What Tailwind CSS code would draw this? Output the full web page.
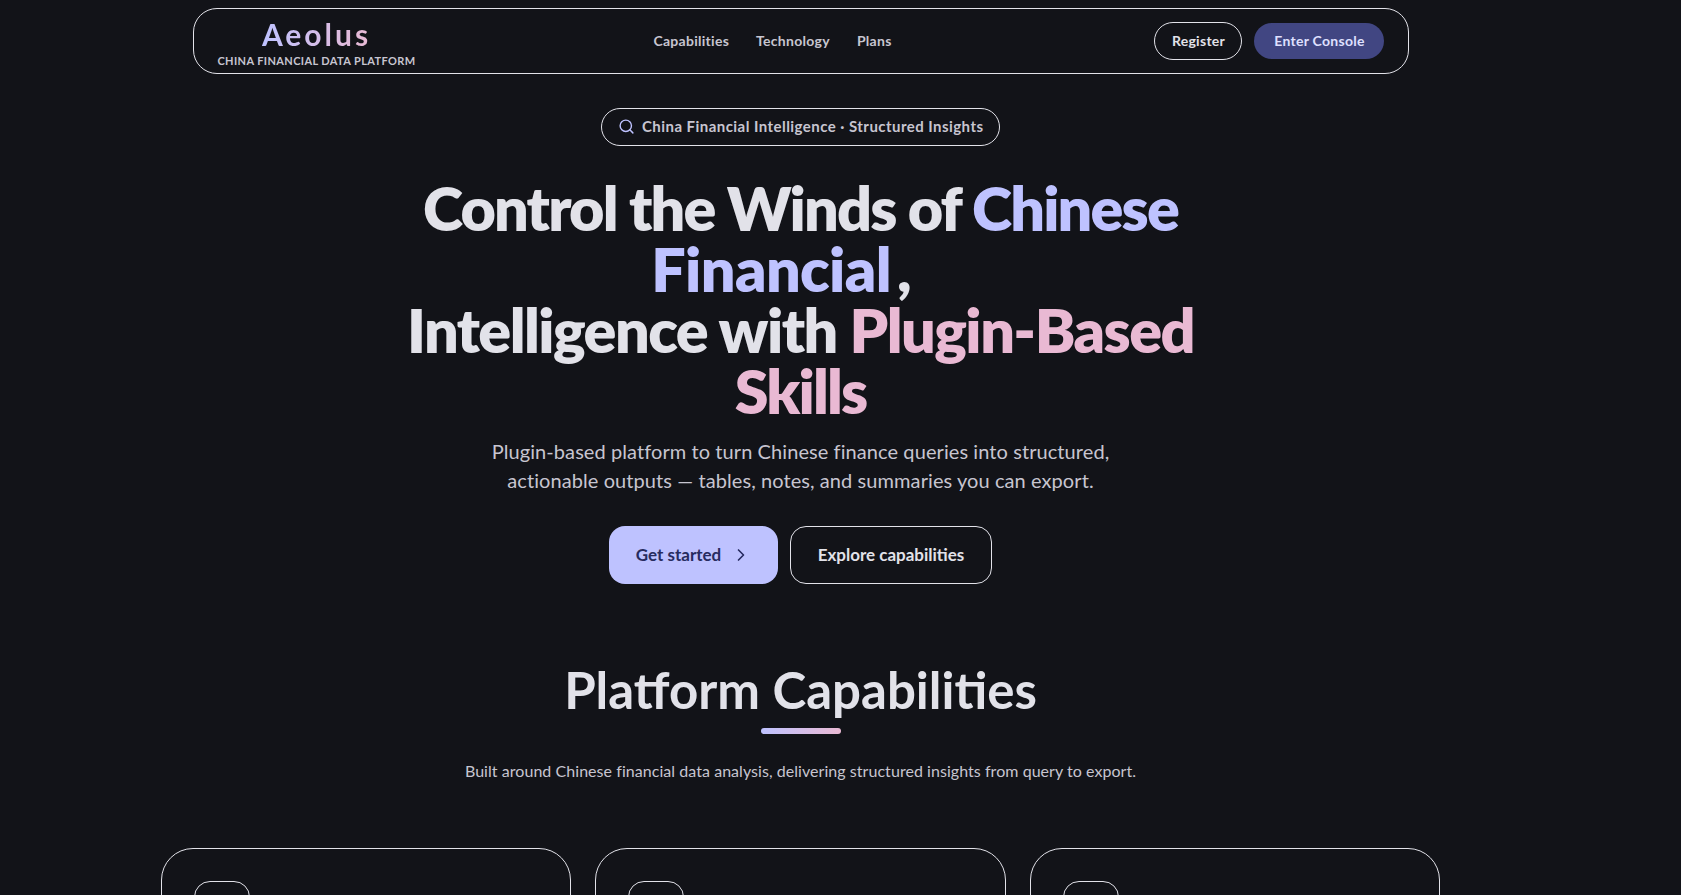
<!DOCTYPE html>
<html lang="en">
<head>
<meta charset="utf-8">
<title>Aeolus</title>
<script src="https://cdn.jsdelivr.net/npm/@tailwindcss/browser@4"></script>
</head>
<body class="bg-[#121318] h-[895px] overflow-hidden font-['Lato','Liberation_Sans',sans-serif] text-[#e2e2e9]">
<main class="w-[1601px] flex flex-col items-center pt-2">
  <nav class="w-[1216px] h-[66px] shrink-0 border border-[#e2e2e9] rounded-[24px] flex justify-between items-center pl-6 pr-[23px]">
    <div class="flex flex-col items-center w-[222px] pr-6 pt-[4px]">
      <span class="text-[30px] leading-[32px] font-bold tracking-[0.1em] bg-gradient-to-r from-[#bec2ff] to-[#e9b9d3] bg-clip-text text-transparent">Aeolus</span>
      <span class="text-[11px] leading-[14px] font-bold text-[#c7c5d0] tracking-[0.035em] mt-[4px] whitespace-nowrap">CHINA FINANCIAL DATA PLATFORM</span>
    </div>
    <div class="flex items-center gap-[27px] mr-[49px] text-[14px] font-bold text-[#c7c5d0] tracking-[0.02em] pb-[2px]">
      <a>Capabilities</a><a>Technology</a><a>Plans</a>
    </div>
    <div class="flex items-center gap-3 text-[14px] font-bold tracking-[0.02em]">
      <button class="h-[38px] w-[88px] pb-[2px] rounded-full border border-[#e2e2e9] text-[#e2e2e9]">Register</button>
      <button class="h-[36px] w-[130px] pb-[2px] rounded-full bg-[#414682] text-[#dfe0ff]">Enter Console</button>
    </div>
  </nav>
  <div class="mt-[34px] h-[38px] w-[399px] pb-[1px] rounded-full border border-[#e2e2e9] flex items-center pl-4 gap-[7px] text-[15px] font-bold text-[#c7c5d0] tracking-[0.03em] whitespace-nowrap">
    <svg class="w-[17px] h-[17px] text-[#bec2ff]" viewBox="0 0 24 24" fill="none" stroke="currentColor" stroke-width="2" stroke-linecap="round" stroke-linejoin="round"><circle cx="11" cy="11" r="8"/><path d="m21 21-4.3-4.3"/></svg>
    <span>China Financial Intelligence · Structured Insights</span>
  </div>
  <h1 class="mt-[31px] text-center text-[61px] leading-[61px] font-extrabold tracking-[-0.03em] whitespace-nowrap">
    Control the Winds of <span class="text-[#bec2ff]">Chinese</span><br>
    <span class="text-[#bec2ff] tracking-[-0.01em]">Financial</span><span class="ml-[6px] mr-[40px]">,</span><br>
    <span class="tracking-[-0.025em]">Intelligence with <span class="text-[#e9b9d3]">Plugin-Based</span></span><br>
    <span class="text-[#e9b9d3]">Skills</span>
  </h1>
  <p class="mt-[16px] text-center text-[20px] leading-[29px] tracking-[0.08px] text-[#c7c5d0] whitespace-nowrap">
    Plugin-based platform to turn Chinese finance queries into structured,<br>
    actionable outputs — tables, notes, and summaries you can export.
  </p>
  <div class="mt-[31px] flex gap-3 text-[17px] font-bold">
    <button class="w-[169px] h-[58px] pb-[1px] rounded-2xl bg-[#bec2ff] text-[#272b60] flex items-center justify-center gap-[10px]">Get started
      <svg class="w-[20px] h-[20px]" viewBox="0 0 24 24" fill="none" stroke="currentColor" stroke-width="2" stroke-linecap="round" stroke-linejoin="round"><path d="m9 18 6-6-6-6"/></svg>
    </button>
    <button class="w-[202px] h-[58px] pb-[1px] rounded-2xl border border-[#e2e2e9] text-[#e2e2e9]">Explore capabilities</button>
  </div>
  <h2 class="mt-[78px] text-[51px] leading-[56px] font-bold text-center">Platform Capabilities</h2>
  <div class="mt-[10px] w-[80px] h-[6px] rounded-full bg-gradient-to-r from-[#bec2ff] to-[#e9b9d3]"></div>
  <p class="mt-[25px] text-[16px] leading-[24px] tracking-[0.05px] text-[#c7c5d0] text-center">Built around Chinese financial data analysis, delivering structured insights from query to export.</p>
  <div class="mt-[65px] w-[1280px] grid grid-cols-3 gap-6">
    <div class="h-[300px] rounded-[32px] border border-[#e2e2e9] p-8"><div class="w-14 h-14 rounded-2xl border border-[#e2e2e9]"></div></div>
    <div class="h-[300px] rounded-[32px] border border-[#e2e2e9] p-8"><div class="w-14 h-14 rounded-2xl border border-[#e2e2e9]"></div></div>
    <div class="h-[300px] rounded-[32px] border border-[#e2e2e9] p-8"><div class="w-14 h-14 rounded-2xl border border-[#e2e2e9]"></div></div>
  </div>
</main>
</body>
</html>
